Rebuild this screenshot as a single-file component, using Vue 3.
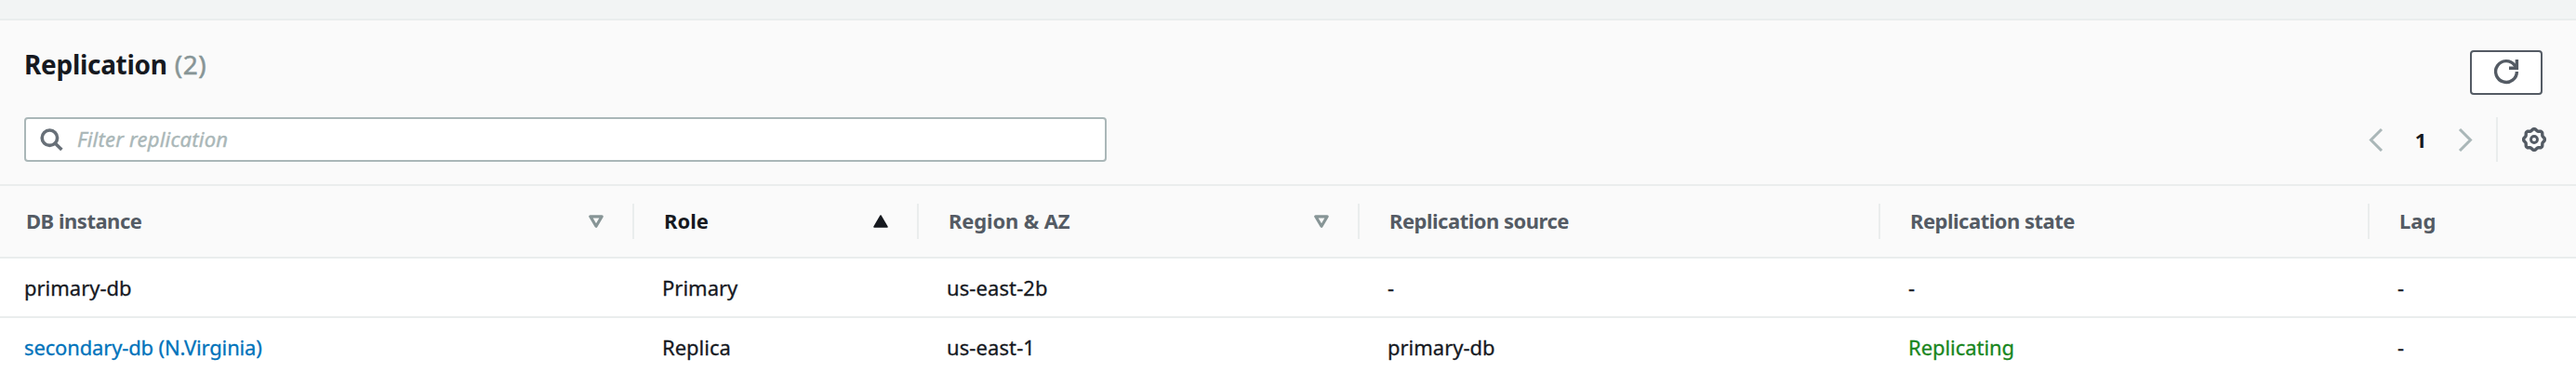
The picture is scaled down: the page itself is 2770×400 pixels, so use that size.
<script setup>
const columns = [
  { label: 'DB instance', key: 'db', sort: 'none' },
  { label: 'Role', key: 'role', sort: 'asc' },
  { label: 'Region & AZ', key: 'region', sort: 'none' },
  { label: 'Replication source', key: 'source' },
  { label: 'Replication state', key: 'state' },
  { label: 'Lag', key: 'lag' },
]
const rows = [
  { db: 'primary-db', role: 'Primary', region: 'us-east-2b', source: '-', state: '-', lag: '-' },
  { db: 'secondary-db (N.Virginia)', link: true, role: 'Replica', region: 'us-east-1', source: 'primary-db', state: 'Replicating', lag: '-' },
]
// Gear outline: eight rounded teeth around the hub.
const gear = Array.from({ length: 64 }, (_, i) => {
  const a = (i / 64) * Math.PI * 2
  const r = 10.6 + 0.9 * Math.cos(8 * a)
  return `${(13 + r * Math.cos(a)).toFixed(2)},${(13 + r * Math.sin(a)).toFixed(2)}`
}).join(' ')
</script>

<template>
  <main class="page">
    <section class="panel">
      <header class="head">
        <h2>Replication <span class="count">(2)</span></h2>
        <button class="refresh" aria-label="Refresh">
          <svg width="32" height="32" viewBox="0 0 32 32" fill="none" stroke="#545b64" stroke-width="3.4">
            <path d="M27.4 15A11.4 11.4 0 1 1 24.8 7.8L26.6 10.2" />
            <path d="M27.4 2V11.2H19" stroke-linejoin="miter" />
          </svg>
        </button>
      </header>
      <div class="tools">
        <div class="search">
          <svg width="26" height="26" viewBox="0 0 26 26" fill="none" stroke="#687078" stroke-width="3.6">
            <circle cx="10.4" cy="11.2" r="8.2" />
            <path d="M16.2 17L23.4 24" />
          </svg>
          <span>Filter replication</span>
        </div>
        <div class="pager">
          <svg width="16" height="26" viewBox="0 0 16 26" fill="none" stroke="#aab7b8" stroke-width="3">
            <path d="M14 2L2.5 13.5L14 25" />
          </svg>
          <b>1</b>
          <svg width="16" height="26" viewBox="0 0 16 26" fill="none" stroke="#aab7b8" stroke-width="3">
            <path d="M2 2L13.5 13.5L2 25" />
          </svg>
        </div>
        <div class="settings">
          <svg width="26" height="26" viewBox="0 0 26 26" fill="none" stroke="#545b64" stroke-linejoin="round">
            <polygon :points="gear" stroke-width="3.4" />
            <circle cx="13" cy="13" r="3.5" stroke-width="2.9" />
          </svg>
        </div>
      </div>
    </section>

    <div class="row header">
      <div v-for="c in columns" :key="c.key" class="th" :class="[c.key, { sorted: c.sort === 'asc' }]">
        <span class="label">{{ c.label }}</span>
        <svg v-if="c.sort === 'none'" width="16" height="14" viewBox="0 0 16 14">
          <path d="M1.8 1.8H14.2L8 12.2Z" fill="none" stroke="#879596" stroke-width="3.2" stroke-linejoin="round" />
        </svg>
        <svg v-else-if="c.sort === 'asc'" width="16" height="14" viewBox="0 0 16 14">
          <path d="M8 1L15 13H1Z" fill="#16191f" stroke="#16191f" stroke-width="1.5" stroke-linejoin="round" />
        </svg>
      </div>
    </div>
    <div v-for="r in rows" :key="r.db" class="row">
      <div v-for="c in columns" :key="c.key" class="td" :class="c.key">
        <span :class="{ link: r.link && c.key === 'db', ok: r[c.key] === 'Replicating' }">{{ r[c.key] }}</span>
      </div>
    </div>
  </main>
</template>

<style>
body { margin: 0; background: #fff; }
</style>
<style scoped>
.page {
  width: 2770px;
  height: 400px;
  overflow: hidden;
  box-sizing: border-box;
  border-top: 20px solid #f2f4f4;
  background: #fff;
  color: #16191f;
  font: 22px/30px "Noto Sans", "Open Sans", sans-serif;
}
.panel {
  height: 180px;
  box-sizing: border-box;
  border-top: 2px solid #eaeded;
  border-bottom: 2px solid #eaeded;
  background: #fafafa;
}
.head {
  display: flex;
  justify-content: space-between;
  align-items: flex-start;
  height: 104px;
  padding: 0 36px 0 26px;
}
h2 {
  margin: 27px 0 0;
  font-size: 28px;
  line-height: 40px;
  font-weight: 700;
  letter-spacing: -0.3px;
}
.count {
  margin-left: 1px;
  color: #879596;
  font-weight: 400;
  letter-spacing: 0.6px;
  -webkit-text-stroke: 0.5px #879596;
}
.refresh {
  display: flex;
  align-items: center;
  justify-content: center;
  box-sizing: border-box;
  width: 78px;
  height: 48px;
  margin-top: 32px;
  padding: 0;
  border: 2px solid #545b64;
  border-radius: 4px;
  background: #fff;
}
.tools { display: flex; height: 48px; padding: 0 32px 0 26px; }
.search {
  display: flex;
  align-items: center;
  width: 1164px;
  box-sizing: border-box;
  padding-left: 15px;
  border: 2px solid #aab7b8;
  border-radius: 4px;
  background: #fff;
  color: #aab7b8;
  font-style: italic;
  letter-spacing: 0.2px;
  -webkit-text-stroke: 0.4px #aab7b8;
}
.search span { margin-left: 14px; padding-bottom: 2px; }
.pager {
  display: flex;
  align-items: center;
  gap: 33px;
  margin-left: auto;
  padding-right: 25px;
}
.pager b { width: 14px; text-align: center; font-size: 22px; padding-bottom: 1px; }
.settings {
  display: flex;
  align-items: center;
  padding-left: 26px;
  border-left: 2px solid #eaeded;
}
.row {
  display: grid;
  grid-template-columns: 682px 306px 474px 560px 526px 222px;
  height: 64px;
  box-sizing: border-box;
  border-bottom: 2px solid #eaeded;
}
.row:last-child { border-bottom: 0; height: 62px; }
.row.header { height: 78px; align-items: center; background: #fafafa; color: #545b64; font-weight: 700; }
.th {
  display: flex;
  align-items: center;
  justify-content: space-between;
  height: 38px;
  box-sizing: border-box;
  padding: 0 31px 0 32px;
  border-right: 2px solid #eaeded;
}
.th .label { padding-bottom: 2px; }
.th:last-child { border-right: 0; }
.th.db { padding-left: 28px; }
.td {
  display: flex;
  align-items: center;
  padding-left: 30px;
}
.td span { -webkit-text-stroke: 0.3px currentColor; }
.td.db { padding-left: 26px; }
.th.db, .th.source, .th.state { letter-spacing: -0.5px; }
.th.region { letter-spacing: -0.15px; }
.td.region { letter-spacing: 0.1px; }
.td .link { color: #0073bb; letter-spacing: -0.15px; }
.td .ok { color: #188620; letter-spacing: -0.05px; }
.th.sorted { color: #16191f; }
</style>
